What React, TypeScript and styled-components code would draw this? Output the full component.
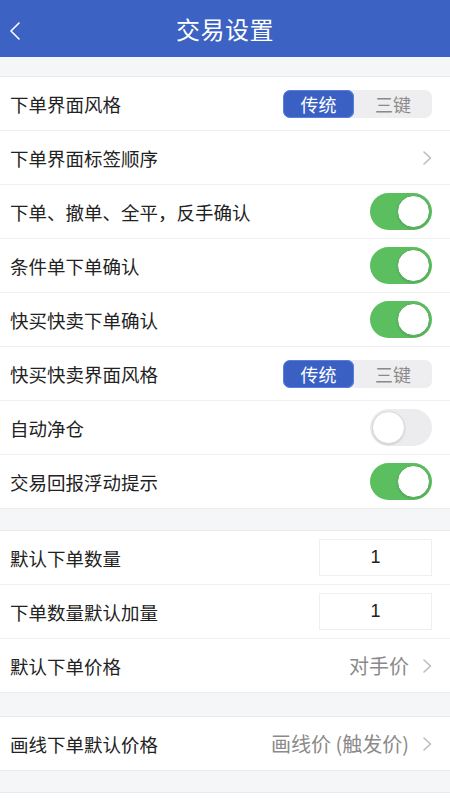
import React from 'react';
import styled, { createGlobalStyle } from 'styled-components';

const GlobalStyle = createGlobalStyle`
  html, body {
    margin: 0;
    padding: 0;
    background: #f5f6f8;
    font-family: "Noto Sans CJK SC", "Noto Sans", sans-serif;
  }
  * { box-sizing: border-box; }
`;

const Page = styled.div`
  width: 450px;
  height: 800px;
  overflow: hidden;
  background: #f5f6f8;
`;

const Header = styled.header`
  height: 57px;
  background: #3c62c3;
  display: flex;
  align-items: center;
  justify-content: center;
  position: relative;
  color: #fff;
`;

const Title = styled.h1`
  margin: 0;
  font-size: 24px;
  font-weight: 400;
  letter-spacing: 0.5px;
`;

const BackButton = styled.div`
  position: absolute;
  left: 8px;
  top: 20px;
  width: 16px;
  height: 22px;
`;

const Gap = styled.div<{ h: number }>`
  height: ${(p) => p.h}px;
  border-bottom: 1px solid #ebebee;
`;

const Group = styled.section`
  background: #fff;
`;

const Row = styled.div<{ last?: boolean }>`
  height: 54px;
  display: flex;
  align-items: center;
  justify-content: space-between;
  padding: 0 18px 0 10px;
  border-bottom: 1px solid ${(p) => (p.last ? '#ebebee' : '#efeff1')};
`;

const Label = styled.span`
  font-size: 18.5px;
  color: #222;
`;

const Segment = styled.div`
  display: flex;
  width: 149px;
  height: 28px;
  border-radius: 7px;
  background: #eeeef0;
  overflow: hidden;
`;

const SegItem = styled.div<{ active?: boolean }>`
  flex: ${(p) => (p.active ? '0 0 71px' : '1')};
  display: flex;
  align-items: center;
  justify-content: center;
  font-size: 18px;
  border-radius: 7px;
  color: ${(p) => (p.active ? '#fff' : '#8a8a8a')};
  background: ${(p) => (p.active ? '#3a60c4' : 'transparent')};
  box-shadow: ${(p) => (p.active ? '0 0 0 1px #5a7fd8 inset' : 'none')};
`;

const Toggle = styled.div<{ on?: boolean }>`
  width: 62px;
  height: 37px;
  border-radius: 19px;
  background: ${(p) => (p.on ? '#5bbf60' : '#ececee')};
  position: relative;
`;

const Knob = styled.div<{ on?: boolean }>`
  position: absolute;
  top: 2px;
  left: ${(p) => (p.on ? '27px' : '2px')};
  width: 33px;
  height: 33px;
  border-radius: 50%;
  background: #fff;
  border: 1px solid ${(p) => (p.on ? '#4fa854' : '#d8d8da')};
  box-shadow: 0 1px 2px rgba(0, 0, 0, 0.12);
`;

const InputBox = styled.div`
  width: 113px;
  height: 37px;
  border: 1px solid #efeff1;
  display: flex;
  align-items: center;
  justify-content: center;
  font-size: 18px;
  color: #222;
  font-family: "Liberation Sans", "Noto Sans", sans-serif;
`;

const Value = styled.div`
  display: flex;
  align-items: center;
  gap: 13px;
  font-size: 20px;
  color: #8a8a8a;
  margin-right: 0;
`;

const Chevron = () => (
  <svg width="10" height="16" viewBox="0 0 10 16">
    <path d="M2 2 L8.5 8 L2 14" fill="none" stroke="#bcbcbf" strokeWidth="1.6" strokeLinecap="round" strokeLinejoin="round" />
  </svg>
);

const Seg = () => (
  <Segment>
    <SegItem active>传统</SegItem>
    <SegItem>三键</SegItem>
  </Segment>
);

const Switch = ({ on }: { on?: boolean }) => (
  <Toggle on={on}>
    <Knob on={on} />
  </Toggle>
);

export default function App() {
  return (
    <Page>
      <GlobalStyle />
      <Header>
        <BackButton>
          <svg width="16" height="22" viewBox="0 0 16 22">
            <path d="M11 3 L3 11 L11 19" fill="none" stroke="#fff" strokeWidth="1.6" strokeLinecap="round" strokeLinejoin="round" />
          </svg>
        </BackButton>
        <Title>交易设置</Title>
      </Header>
      <Gap h={20} />
      <Group>
        <Row>
          <Label>下单界面风格</Label>
          <Seg />
        </Row>
        <Row>
          <Label>下单界面标签顺序</Label>
          <Chevron />
        </Row>
        <Row>
          <Label>下单、撤单、全平，反手确认</Label>
          <Switch on />
        </Row>
        <Row>
          <Label>条件单下单确认</Label>
          <Switch on />
        </Row>
        <Row>
          <Label>快买快卖下单确认</Label>
          <Switch on />
        </Row>
        <Row>
          <Label>快买快卖界面风格</Label>
          <Seg />
        </Row>
        <Row>
          <Label>自动净仓</Label>
          <Switch />
        </Row>
        <Row last>
          <Label>交易回报浮动提示</Label>
          <Switch on />
        </Row>
      </Group>
      <Gap h={22} />
      <Group>
        <Row>
          <Label>默认下单数量</Label>
          <InputBox>1</InputBox>
        </Row>
        <Row>
          <Label>下单数量默认加量</Label>
          <InputBox>1</InputBox>
        </Row>
        <Row last>
          <Label>默认下单价格</Label>
          <Value>
            对手价
            <Chevron />
          </Value>
        </Row>
      </Group>
      <Gap h={24} />
      <Group>
        <Row last>
          <Label>画线下单默认价格</Label>
          <Value>
            画线价 (触发价)
            <Chevron />
          </Value>
        </Row>
      </Group>
      <Gap h={22} />
      <Group>
        <Row />
      </Group>
    </Page>
  );
}
